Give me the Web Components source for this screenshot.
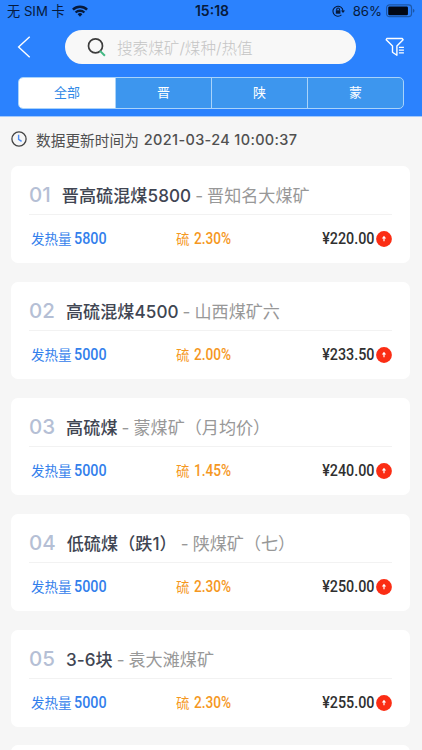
<!DOCTYPE html>
<html lang="zh-CN">
<head>
<meta charset="utf-8">
<meta name="viewport" content="width=device-width, initial-scale=1">
<title>煤价</title>
<style>
  html, body { margin: 0; height: 100%; overflow: hidden; }
  body {
    background: #f6f6f6;
    font-family: Inter, "Noto Sans CJK SC", sans-serif;
  }
</style>
</head>
<body>
<coal-page></coal-page>

<script>
class StatusBar extends HTMLElement {
  connectedCallback() {
    const root = this.attachShadow({ mode: "open" });
    root.innerHTML = `
      <style>
        :host {
          display: grid;
          grid-template-columns: 1fr auto 1fr;
          align-items: center;
          height: 22px;
          padding: 0 7px 0 7px;
          color: #061a3c;
          font-size: 13.2px;
          line-height: 22px;
        }
        .left, .right { display: flex; align-items: center; }
        .left { gap: 7px; }
        .right { justify-content: flex-end; }
        .time { font-weight: 600; font-size: 14px; margin-left: 2px; }
        .lock { margin-right: 8px; }
        .battery { margin-left: 4px; }
        svg { display: block; }
      </style>
      <div class="left">
        <span>无 SIM 卡</span>
        <svg width="16" height="12" viewBox="0 0 16 12" fill="none" stroke="#061a3c" stroke-width="2.4">
          <path d="M.9 4.6a10.2 10.2 0 0 1 14.2 0"/>
          <path d="M3.6 7.5a6.4 6.4 0 0 1 8.8 0"/>
          <path d="M8 11.7 5.6 9.2a3.5 3.5 0 0 1 4.8 0z" fill="#061a3c" stroke="none"/>
        </svg>
      </div>
      <span class="time">15:18</span>
      <div class="right">
        <svg class="lock" width="13" height="12" viewBox="0 0 13 12" fill="none" stroke="#061a3c" stroke-width="1.1">
          <path d="M9.4 9.9A5 5 0 1 1 11 6"/>
          <path d="M9 5.6h4L11 8z" fill="#061a3c" stroke="none"/>
          <rect x="3.8" y="5.3" width="4.6" height="3.4" fill="#061a3c" stroke="none"/>
          <path d="M4.7 5.5V4.4a1.4 1.4 0 0 1 2.8 0v1.1"/>
        </svg>
        <span>86%</span>
        <svg class="battery" width="29" height="14" viewBox="0 0 30 14">
          <rect x=".6" y=".6" width="25.8" height="12.3" rx="3" fill="none" stroke="#1c57a8" stroke-width="1.2"/>
          <rect x="2.3" y="2.3" width="20.4" height="9" rx="1.3" fill="#020815"/>
          <path d="M27.8 4.7q1.7.6 1.7 2.1t-1.7 2.1z" fill="#1c57a8"/>
        </svg>
      </div>
    `;
  }
}
customElements.define("status-bar", StatusBar);

class SearchBar extends HTMLElement {
  connectedCallback() {
    const root = this.attachShadow({ mode: "open" });
    root.innerHTML = `
      <style>
        :host {
          display: flex;
          align-items: center;
          height: 50px;
          padding: 0 17px 0 16px;
        }
        svg { display: block; flex: none; }
        .field {
          box-sizing: border-box;
          display: flex;
          align-items: center;
          gap: 11px;
          width: 291px;
          height: 34px;
          margin: 0 auto 0 33px;
          padding-left: 22px;
          border-radius: 17px;
          background: #f8f8f8;
          color: #c5c5c5;
          font-size: 15.6px;
          font-weight: 300;
        }
      </style>
      <svg width="16" height="24" viewBox="0 0 16 24" fill="none" stroke="#fff" stroke-width="1.4">
        <path d="M13.7 1.7 2.6 12l11.1 10.3"/>
      </svg>
      <div class="field">
        <svg width="19" height="20" viewBox="0 0 19 20" fill="none">
          <circle cx="8.5" cy="8.9" r="7" stroke="#3c3c3c" stroke-width="1.7"/>
          <path d="m13 13.9 4.9 4.9" stroke="#42b983" stroke-width="2"/>
        </svg>
        <span><slot></slot></span>
      </div>
      <svg width="20" height="20" viewBox="0 0 20 20" fill="none" stroke="#fff" stroke-width="1.4" stroke-linejoin="round">
        <path d="M1.8 1.5h15.4l.9 1.2-6.2 6.4v9.2l-4.4-3.1V9.1L1.2 2.7z"/>
        <path d="M13.9 10.4h5M13.9 13.1h5M13.9 15.8h5" stroke-width="1.2"/>
      </svg>
    `;
  }
}
customElements.define("search-bar", SearchBar);

class SegmentTabs extends HTMLElement {
  connectedCallback() {
    const root = this.attachShadow({ mode: "open" });
    const tabs = this.getAttribute("tabs").split(",");
    root.innerHTML = `
      <style>
        :host {
          box-sizing: border-box;
          display: grid;
          grid-template-columns: repeat(4, 1fr);
          height: 32px;
          margin: 5px 18px 8px 18px;
          border: 1px solid #a9d3fa;
          border-radius: 5px;
          overflow: hidden;
          background: #3d96ee;
          color: #fff;
          font-size: 13px;
          line-height: 29px;
          text-align: center;
        }
        div + div { border-left: 1px solid #a9d3fa; }
        .on { background: #fff; color: #3189e6; }
      </style>
      ${tabs.map((t, i) => `<div class="${i === 0 ? "on" : ""}">${t}</div>`).join("")}
    `;
  }
}
customElements.define("segment-tabs", SegmentTabs);

class UpdateNote extends HTMLElement {
  connectedCallback() {
    const root = this.attachShadow({ mode: "open" });
    root.innerHTML = `
      <style>
        :host {
          display: flex;
          align-items: center;
          height: 44px;
          padding: 0 0 2px 11px;
          color: #505050;
          font-size: 14.7px;
          white-space: nowrap;
        }
        svg { margin-right: 9px; }
        .time { margin-left: 5px; font-size: 14.5px; font-weight: 500; letter-spacing: .34px; }
      </style>
      <svg width="16" height="16" viewBox="0 0 16 16" fill="none">
        <circle cx="8" cy="8" r="7.1" stroke="#444" stroke-width="1.3"/>
        <path d="M7.6 3.7v4.6l3 2.1" stroke="#4c8df6" stroke-width="1.4"/>
      </svg>
      <span>数据更新时间为</span>
      <span class="time">${this.getAttribute("time")}</span>
    `;
  }
}
customElements.define("update-note", UpdateNote);

class CoalCard extends HTMLElement {
  connectedCallback() {
    const root = this.attachShadow({ mode: "open" });
    const get = (name) => this.getAttribute(name);
    root.innerHTML = `
      <style>
        :host {
          box-sizing: border-box;
          display: block;
          height: 97px;
          padding: 0 18px;
          border-radius: 7px;
          background: #fff;
          white-space: nowrap;
        }
        .head {
          display: flex;
          align-items: baseline;
          box-sizing: border-box;
          height: 49px;
          padding-top: 12px;
          border-bottom: 1px solid #f2f2f2;
          line-height: 34px;
        }
        .no {
          margin-right: 11px;
          color: #b5bfd5;
          font-size: 20.5px;
          font-weight: 500;
        }
        .name { color: #404552; font-size: 17.1px; font-weight: 500; letter-spacing: .06px; }
        .mine { color: #989898; font-size: 17.1px; white-space: pre; word-spacing: -.8px; }
        .row {
          display: grid;
          grid-template-columns: 145px 1fr auto;
          align-items: center;
          height: 48px;
          padding-left: 2px;
          font-size: 13.5px;
          line-height: 48px;
        }
        .heat { color: #3380ec; }
        .sulfur { color: #f5981f; }
        /* narrow figures */
        .num {
          display: inline-block;
          transform: scaleX(.88);
          transform-origin: 0 50%;
          font-family: Roboto, sans-serif;
          font-size: 16.3px;
          font-weight: 500;
        }
        .heat .num { margin-left: 2px; }
        .sulfur .num { margin-left: 4px; transform: scaleX(.84); }
        .price { display: flex; align-items: center; color: #303030; }
        .price .num { transform-origin: 100% 50%; margin-right: 2px; }
      </style>
      <div class="head">
        <span class="no">${get("no")}</span>
        <span class="name">${get("name")}</span>
        <span class="mine"> - ${get("mine")}</span>
      </div>
      <div class="row">
        <div class="heat">发热量<span class="num">${get("heat")}</span></div>
        <div class="sulfur">硫<span class="num">${get("sulfur")}</span></div>
        <div class="price">
          <span class="num">¥${get("price")}</span>
          <svg width="16" height="16" viewBox="0 0 16 16">
            <circle cx="8" cy="8" r="7.9" fill="#fb2d14"/>
            <path d="M8 4.7 5.8 7.4h1.6v2.8h1.2V7.4h1.6z" fill="#fff"/>
          </svg>
        </div>
      </div>
    `;
  }
}
customElements.define("coal-card", CoalCard);

class CoalPage extends HTMLElement {
  connectedCallback() {
    const root = this.attachShadow({ mode: "open" });
    const items = [
      ["01", "晋高硫混煤5800", "晋知名大煤矿", "5800", "2.30%", "220.00"],
      ["02", "高硫混煤4500", "山西煤矿六", "5000", "2.00%", "233.50"],
      ["03", "高硫煤", "蒙煤矿（月均价）", "5000", "1.45%", "240.00"],
      ["04", "低硫煤（跌1）", "陕煤矿（七）", "5000", "2.30%", "250.00"],
      ["05", "3-6块", "袁大滩煤矿", "5000", "2.30%", "255.00"],
    ];
    root.innerHTML = `
      <style>
        :host { display: block; height: 100vh; overflow: hidden; }
        header {
          display: flow-root;
          box-sizing: border-box;
          height: 117px;
          background: #2b82fe;
          border-bottom: 1px solid #a3c9fb;
        }
        main {
          display: grid;
          gap: 18.9px;
          padding: 3px 12px 0 11px;
        }
        .next { height: 97px; border-radius: 7px; background: #fff; }
      </style>
      <header>
        <status-bar></status-bar>
        <search-bar>搜索煤矿/煤种/热值</search-bar>
        <segment-tabs tabs="全部,晋,陕,蒙"></segment-tabs>
      </header>
      <update-note time="2021-03-24 10:00:37"></update-note>
      <main>
        ${items.map(([no, name, mine, heat, sulfur, price]) => `
          <coal-card no="${no}" name="${name}" mine="${mine}" heat="${heat}" sulfur="${sulfur}" price="${price}"></coal-card>
        `).join("")}
        <div class="next"></div>
      </main>
    `;
  }
}
customElements.define("coal-page", CoalPage);
</script>
</body>
</html>
